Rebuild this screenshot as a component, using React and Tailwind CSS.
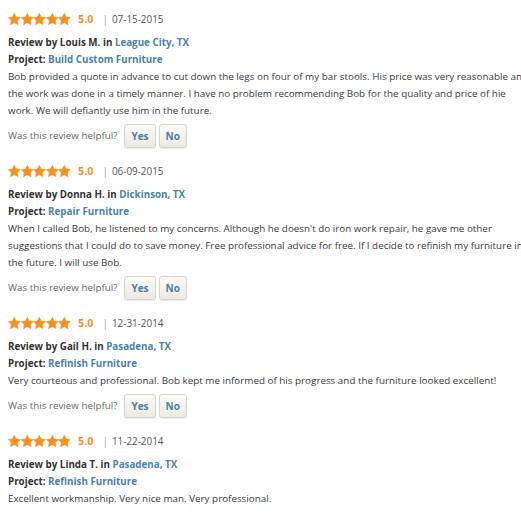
import React from 'react';

const reviews = [
  {
    date: '07-15-2015',
    name: 'Louis M.',
    city: 'League City, TX',
    project: 'Build Custom Furniture',
    text: 'Bob provided a quote in advance to cut down the legs on four of my bar stools. His price was very reasonable and the work was done in a timely manner. I have no problem recommending Bob for the quality and price of hie work. We will defiantly use him in the future.',
    helpful: true,
  },
  {
    date: '06-09-2015',
    name: 'Donna H.',
    city: 'Dickinson, TX',
    project: 'Repair Furniture',
    text: "When I called Bob, he listened to my concerns. Although he doesn't do iron work repair, he gave me other suggestions that I could do to save money. Free professional advice for free. If I decide to refinish my furniture in the future. I will use Bob.",
    helpful: true,
  },
  {
    date: '12-31-2014',
    name: 'Gail H.',
    city: 'Pasadena, TX',
    project: 'Refinish Furniture',
    text: 'Very courteous and professional. Bob kept me informed of his progress and the furniture looked excellent!',
    helpful: true,
  },
  {
    date: '11-22-2014',
    name: 'Linda T.',
    city: 'Pasadena, TX',
    project: 'Refinish Furniture',
    text: 'Excellent workmanship. Very nice man. Very professional.',
    helpful: false,
  },
];

function Star() {
  return (
    <svg width="12.6" height="12" viewBox="0 0 24 23" className="shrink-0">
      <path
        d="M12 0.3l3.6 7.3 8.1 1.1-5.9 5.6 1.5 8L12 18.6l-7.3 3.7 1.5-8L0.3 8.7l8.1-1.1z"
        fill="#f7901e"
        stroke="#f7901e"
        strokeWidth="1"
        strokeLinejoin="round"
      />
    </svg>
  );
}

function HelpButton({ label }) {
  return (
    <button className="h-[24px] px-[6px] rounded-[3px] border border-[#d4d4cc] bg-gradient-to-b from-[#fbfbf8] to-[#ebebe4] text-[10px] font-bold text-[#4f7f9f] leading-none shadow-[0_1px_1px_rgba(0,0,0,0.08)]">
      {label}
    </button>
  );
}

export default function App() {
  return (
    <div className="w-[521px] h-[514px] overflow-hidden bg-white font-['Open_Sans',sans-serif] text-[9.85px] text-[#3a3a3a]">
      <div className="w-[531px] pl-[8px] pt-[9px]">
        {reviews.map(r => (
          <div key={r.date} className="mb-[13px]">
            {/* Rating row */}
            <div className="flex items-center h-[20px]">
              <div className="flex">
                {[0, 1, 2, 3, 4].map(i => <Star key={i} />)}
              </div>
              <span className="ml-[7px] text-[10.8px] font-bold text-[#f7901e]">5.0</span>
              <span className="ml-[9px] text-[10px] text-[#9aa5ad]">|</span>
              <span className="ml-[4px] text-[9.9px] text-[#555]">{r.date}</span>
            </div>
            <div className="mt-[6px] leading-[16px] font-bold text-[9.8px] text-[#333]">
              Review by {r.name} in <span className="text-[#4a82a8]">{r.city}</span>
            </div>
            <div className="leading-[17px] font-bold text-[9.8px] text-[#333]">
              Project: <span className="text-[#4a82a8]">{r.project}</span>
            </div>
            <p className="leading-[17px]">{r.text}</p>
            {r.helpful && (
              <div className="flex items-center gap-[3px] mt-[5px]">
                <span className="mr-[4px] text-[9.8px] text-[#666]">Was this review helpful?</span>
                <HelpButton label="Yes" />
                <HelpButton label="No" />
              </div>
            )}
          </div>
        ))}
      </div>
    </div>
  );
}
